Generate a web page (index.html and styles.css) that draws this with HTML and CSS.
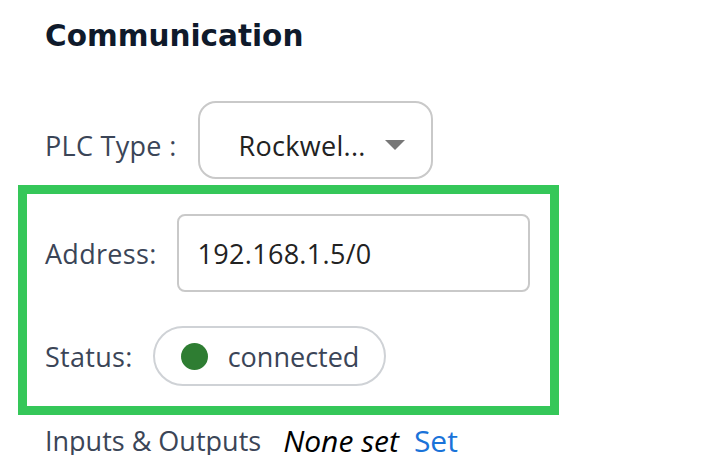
FILE: index.html
```html
<!DOCTYPE html>
<html>
<head>
<meta charset="utf-8">
<link rel="stylesheet" href="styles.css">
</head>
<body>
<div class="panel">
  <h2 class="title">Communication</h2>
  <div class="row plc-row">
    <span class="label">PLC Type :</span>
    <div class="select">
      <span class="select-text">Rockwel...</span>
      <span class="caret"></span>
    </div>
  </div>
  <div class="highlight">
    <div class="row">
      <span class="label">Address:</span>
      <div class="input">192.168.1.5/0</div>
    </div>
    <div class="row status-row">
      <span class="label">Status:</span>
      <div class="pill"><span class="dot"></span><span class="pill-text">connected</span></div>
    </div>
  </div>
  <div class="row io-row">
    <span class="label">Inputs &amp; Outputs</span>
    <span class="none">None set</span>
    <span class="link">Set</span>
  </div>
</div>
</body>
</html>
```

FILE: styles.css
```css
html, body {
  margin: 0;
  padding: 0;
  background: #ffffff;
}
body {
  font-family: "Open Sans", "Lato", sans-serif;
  font-size: 27px;
  letter-spacing: 0.3px;
  color: #3b4557;
}
.panel {
  padding: 0 0 0 18px;
  width: 541px;
}
.title {
  margin: 0;
  padding: 17px 0 0 27px;
  height: 38px;
  line-height: 38px;
  font-family: "DejaVu Sans", "Inter", sans-serif;
  font-weight: 700;
  font-size: 29.5px;
  letter-spacing: 0;
  color: #0f1a2b;
}
.row {
  display: flex;
  align-items: center;
}
.plc-row {
  margin-top: 46px;
  padding-left: 27px;
  height: 78px;
}
.plc-row .label {
  padding-top: 10px;
}
.label {
  color: #3b4557;
  white-space: nowrap;
}
.select {
  box-sizing: border-box;
  margin-left: 21px;
  width: 235px;
  height: 78px;
  border: 2px solid #c9c9c9;
  border-radius: 18px;
  display: flex;
  align-items: center;
  padding: 10px 26px 0 39px;
  color: #222222;
}
.select-text {
  flex: 1;
}
.caret {
  width: 0;
  height: 0;
  border-left: 10px solid transparent;
  border-right: 10px solid transparent;
  border-top: 10px solid #777777;
}
.highlight {
  margin-top: 6px;
  border: 9px solid #35c759;
  padding: 20px 0 20px 18px;
}
.input {
  box-sizing: border-box;
  margin-left: 20px;
  width: 353px;
  height: 78px;
  border: 2px solid #c9c9c9;
  border-radius: 8px;
  display: flex;
  align-items: center;
  padding-left: 19px;
  color: #222222;
}
.status-row {
  margin-top: 34px;
}
.pill {
  box-sizing: border-box;
  margin-left: 20px;
  height: 60px;
  border: 2px solid #cfd2d6;
  border-radius: 30px;
  display: flex;
  align-items: center;
  padding: 0 25px 0 26px;
}
.dot {
  width: 27px;
  height: 27px;
  border-radius: 50%;
  background: #2e7d32;
  margin-right: 20px;
}
.pill-text {
  color: #3b4557;
  letter-spacing: 0;
}
.io-row {
  padding-left: 27px;
  margin-top: 10px;
  height: 30px;
  letter-spacing: 0;
}
.none {
  margin-left: 22px;
  font-size: 30px;
  font-style: italic;
  color: #000000;
}
.link {
  margin-left: 15px;
  font-size: 30px;
  color: #1a73d9;
}
```
